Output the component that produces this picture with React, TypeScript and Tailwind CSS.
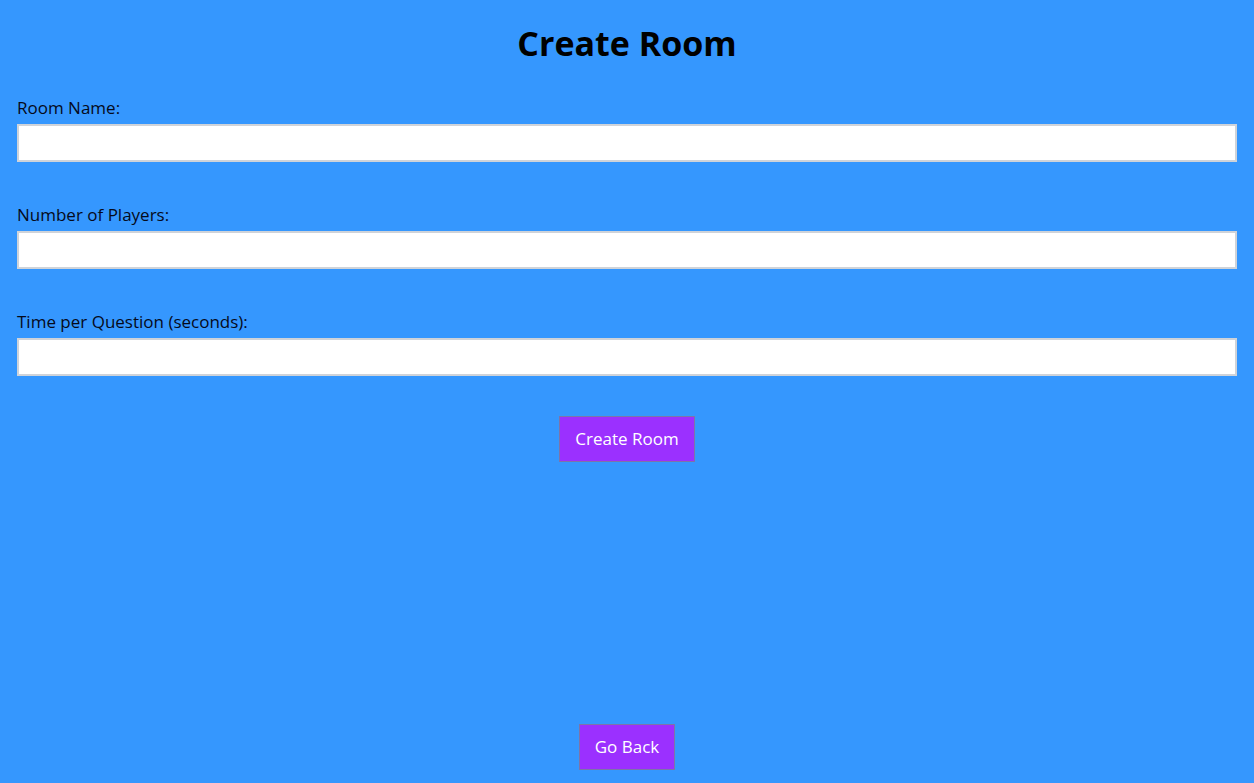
import React, { useState } from 'react';

const font = { fontFamily: '"Open Sans", "Noto Sans", sans-serif' };

function Field({ label, value, onChange, type = 'text' }: { label: string; value: string; onChange: (v: string) => void; type?: string }) {
  return (
    <div className="flex flex-col">
      <label className="text-[17px] leading-[23px] text-[#050a1a]">{label}</label>
      <input
        type={type}
        value={value}
        onChange={(e) => onChange(e.target.value)}
        className="mt-[5px] h-[38px] w-full border-2 border-[#cfd3d9] bg-white px-2 text-[17px] outline-none"
      />
    </div>
  );
}

export default function App() {
  const [name, setName] = useState('');
  const [players, setPlayers] = useState('');
  const [time, setTime] = useState('');

  return (
    <div style={font} className="flex min-h-screen flex-col bg-[#3597fe] px-[17px] pb-[13px]">
      <h1 className="pt-[20px] text-center text-[34px] font-bold leading-[46px] text-black">Create Room</h1>

      <div className="mt-[30px] flex flex-col gap-[41px]">
        <Field label="Room Name:" value={name} onChange={setName} />
        <Field label="Number of Players:" value={players} onChange={setPlayers} type="number" />
        <Field label="Time per Question (seconds):" value={time} onChange={setTime} type="number" />
      </div>

      <div className="mt-[40px] flex justify-center">
        <button className="border border-[#7d74a8] bg-[#9b30ff] px-[15px] py-[11px] text-[17px] leading-[22px] text-white">
          Create Room
        </button>
      </div>

      <div className="mt-auto flex justify-center">
        <button className="border border-[#7d74a8] bg-[#9b30ff] px-[15px] py-[11px] text-[17px] leading-[22px] text-white">
          Go Back
        </button>
      </div>
    </div>
  );
}
